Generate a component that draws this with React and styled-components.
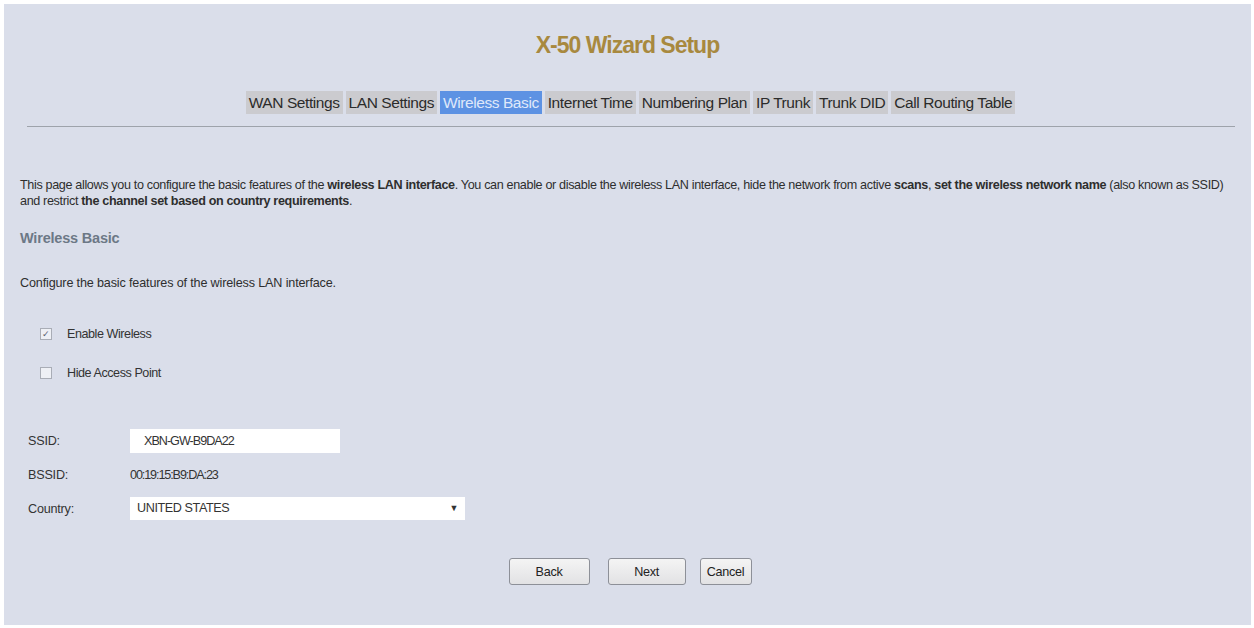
import React from "react";
import styled, { createGlobalStyle, css } from "styled-components";

const Global = createGlobalStyle`
  html, body { margin: 0; padding: 0; background: #ffffff; }
  body { font-family: "Liberation Sans", Arial, sans-serif; color: #2a2a2a; }
`;

const small = css`
  font-size: 12.6px;
  letter-spacing: -0.35px;
  line-height: 16px;
  color: #2e2e2e;
`;

const Page = styled.div`
  padding: 4px 3px 3px 4px;
  height: 628px;
  box-sizing: border-box;
`;

const Panel = styled.div`
  background: #dadeea;
  height: 100%;
  box-sizing: border-box;
  padding: 26px 16px 0 16px;
  display: flex;
  flex-direction: column;
`;

const Title = styled.h1`
  margin: 0;
  text-align: center;
  font-size: 23px;
  letter-spacing: -1px;
  font-weight: bold;
  color: #a8893f;
  line-height: 30px;
`;

const Tabs = styled.nav`
  display: flex;
  justify-content: center;
  gap: 3px;
  margin-top: 31px;
  padding-left: 6px;
`;

const Tab = styled.span`
  font-size: 15.5px;
  letter-spacing: -0.42px;
  line-height: 23px;
  padding: 0 3px;
  background: ${(p) => (p.$active ? "#5d92e3" : "#cbcbcf")};
  color: ${(p) => (p.$active ? "#dfe8fa" : "#2b2b2b")};
`;

const Rule = styled.hr`
  border: none;
  border-top: 1px solid #9ea3ab;
  margin: 12px 0 0 7px;
  width: 1208px;
`;

const Intro = styled.p`
  ${small}
  margin: 50px 0 0 0;
  b { font-weight: bold; }
`;

const SectionTitle = styled.h2`
  margin: 13px 0 0 0;
  font-size: 14.5px;
  letter-spacing: -0.2px;
  font-weight: bold;
  color: #6c7886;
  line-height: 32px;
`;

const Note = styled.p`
  ${small}
  letter-spacing: -0.15px;
  margin: 21px 0 0 0;
`;

const Checks = styled.div`
  display: flex;
  flex-direction: column;
  gap: 23px;
  margin: 35px 0 0 20px;
`;

const CheckRow = styled.label`
  ${small}
  letter-spacing: -0.45px;
  display: flex;
  align-items: center;
  gap: 15px;
  color: #333;
`;

const Box = styled.span`
  width: 10px;
  height: 10px;
  border: 1px solid #a9adb6;
  background: #eef0f5;
  display: inline-flex;
  align-items: center;
  justify-content: center;
  font-size: 9px;
  letter-spacing: 0;
  color: #5a6070;
  line-height: 1;
`;

const Fields = styled.div`
  display: grid;
  grid-template-columns: 102px auto;
  align-items: center;
  row-gap: 10px;
  margin: 48px 0 0 8px;
  justify-content: start;
`;

const FieldLabel = styled.span`
  ${small}
  letter-spacing: -0.2px;
  color: #333;
`;

const Input = styled.div`
  ${small}
  letter-spacing: -1px;
  width: 196px;
  height: 24px;
  background: #ffffff;
  line-height: 24px;
  padding-left: 14px;
  color: #333;
`;

const Value = styled.span`
  ${small}
  letter-spacing: -1.1px;
  color: #333;
  line-height: 24px;
`;

const Select = styled.div`
  ${small}
  letter-spacing: -0.4px;
  width: 328px;
  height: 23px;
  background: #ffffff;
  line-height: 23px;
  padding-left: 7px;
  display: flex;
  justify-content: space-between;
  align-items: center;
  color: #333;
`;

const Arrow = styled.span`
  font-size: 9px;
  color: #333;
  margin-right: 7px;
`;

const Buttons = styled.div`
  display: flex;
  justify-content: center;
  gap: 18px;
  margin-top: 38px;
  padding-left: 5px;
  & > :nth-child(3) { margin-left: -4px; }
`;

const Button = styled.button`
  font-family: inherit;
  font-size: 12.6px;
  letter-spacing: -0.3px;
  width: ${(p) => p.$w}px;
  height: 27px;
  border: 1px solid #8d9098;
  border-radius: 3px;
  background: linear-gradient(#f4f4f4, #e2e2e4);
  color: #222;
  padding: 0;
`;

const tabs = [
  "WAN Settings",
  "LAN Settings",
  "Wireless Basic",
  "Internet Time",
  "Numbering Plan",
  "IP Trunk",
  "Trunk DID",
  "Call Routing Table",
];

export default function App() {
  return (
    <Page>
      <Global />
      <Panel>
        <Title>X-50 Wizard Setup</Title>
        <Tabs>
          {tabs.map((t) => (
            <Tab key={t} $active={t === "Wireless Basic"}>{t}</Tab>
          ))}
        </Tabs>
        <Rule />
        <Intro>
          This page allows you to configure the basic features of the <b>wireless LAN interface</b>. You can enable or disable the wireless LAN interface, hide the network from active <b>scans</b>, <b>set the wireless network name</b> (also known as SSID) and restrict <b>the channel set based on country requirements</b>.
        </Intro>
        <SectionTitle>Wireless Basic</SectionTitle>
        <Note>Configure the basic features of the wireless LAN interface.</Note>
        <Checks>
          <CheckRow><Box>✓</Box>Enable Wireless</CheckRow>
          <CheckRow><Box />Hide Access Point</CheckRow>
        </Checks>
        <Fields>
          <FieldLabel>SSID:</FieldLabel>
          <Input>XBN-GW-B9DA22</Input>
          <FieldLabel>BSSID:</FieldLabel>
          <Value>00:19:15:B9:DA:23</Value>
          <FieldLabel>Country:</FieldLabel>
          <Select>UNITED STATES<Arrow>▼</Arrow></Select>
        </Fields>
        <Buttons>
          <Button $w={81}>Back</Button>
          <Button $w={78}>Next</Button>
          <Button $w={52}>Cancel</Button>
        </Buttons>
      </Panel>
    </Page>
  );
}
